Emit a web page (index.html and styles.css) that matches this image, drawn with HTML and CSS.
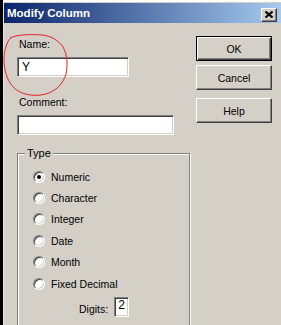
FILE: index.html
```html
<!DOCTYPE html>
<html lang="en">
<head>
    <meta charset="UTF-8">
    <title>Modify Column</title>
    <link rel="stylesheet" href="styles.css">
</head>
<body>

<div class="screen">
    <div class="window">
        <div class="titlebar">
            <span class="title">Modify Column</span>
            <span class="close">
                <svg width="8" height="7" viewBox="0 0 8 7"><path d="M0.5 0.5 L7.5 6.5 M7.5 0.5 L0.5 6.5" stroke="#000" stroke-width="2"/></svg>
            </span>
        </div>

        <div class="dialog">
            <div class="fields">
                <div class="label">Name:</div>
                <div class="input name-input">Y</div>
                <div class="label comment-label">Comment:</div>
                <div class="input comment-input"></div>

                <div class="group">
                    <div class="group-title">Type</div>
                    <div class="options">
                        <div class="option"><span class="radio checked"></span>Numeric</div>
                        <div class="option"><span class="radio"></span>Character</div>
                        <div class="option"><span class="radio"></span>Integer</div>
                        <div class="option"><span class="radio"></span>Date</div>
                        <div class="option"><span class="radio"></span>Month</div>
                        <div class="option"><span class="radio"></span>Fixed Decimal</div>
                    </div>
                    <div class="digits">
                        <span>Digits:</span>
                        <span class="input digits-input">2</span>
                    </div>
                </div>
            </div>

            <div class="buttons">
                <div class="button default">OK</div>
                <div class="button">Cancel</div>
                <div class="button help">Help</div>
            </div>
        </div>
    </div>

    <!-- red marker circle drawn over the Name field -->
    <svg class="marker" width="70" height="66" viewBox="0 0 70 66">
        <path d="M8 4 C14 1 26 0 40 1 C50 2 57 7 61 13 C65 20 66 30 64 40 C61 50 54 57 44 60 C36 62 26 62 18 58 C10 54 5 46 3 36 C1 26 2 16 5 10 C6 7 7 5 9 4" fill="none" stroke="#e8202a" stroke-width="1"/>
    </svg>
</div>

</body>
</html>
```

FILE: styles.css
```css
body {
    margin: 0;
    padding: 0;
    background-color: #fff;
    font-family: "Liberation Sans", Arial, sans-serif;
    font-size: 10.5px;
    color: #000;
}
.screen {
    position: relative;
    width: 278px;
    height: 325px;
    overflow: hidden;
    border-left: 3px solid #000;
}
.window {
    margin-top: 2px;
    height: 323px;
    background-color: #d4d0c8;
    border-top: 1px solid #d4d0c8;
    border-left: 1px solid #e8e6e2;
}
.titlebar {
    height: 20px;
    display: flex;
    align-items: center;
    justify-content: space-between;
    padding: 0 4px 0 3px;
    background: linear-gradient(to right, #0a246a, #a6caf0);
}
.title {
    color: #fff;
    font-weight: bold;
    font-size: 11.5px;
}
.close {
    width: 14px;
    height: 12px;
    display: flex;
    align-items: center;
    justify-content: center;
    background-color: #d4d0c8;
    border: 1px solid;
    border-color: #fff #404040 #404040 #fff;
    box-shadow: inset -1px -1px 0 #808080;
    margin-top: 3px;
}
.dialog {
    display: grid;
    grid-template-columns: 1fr 76px;
    padding: 13px 9px 0 13px;
}
.fields {
    padding-top: 2px;
}
.label {
    line-height: 13px;
    height: 13px;
    padding-left: 2px;
}
.input {
    box-sizing: border-box;
    height: 20px;
    background-color: #fff;
    border: 1px solid;
    border-color: #808080 #fff #fff #808080;
    box-shadow: inset 1px 1px 0 #404040, inset -1px -1px 0 #d4d0c8;
    padding: 3px 0 0 4px;
    font-size: 12px;
    line-height: 13px;
}
.name-input {
    width: 112px;
    margin-top: 6px;
}
.comment-label {
    margin-top: 19px;
}
.comment-input {
    width: 157px;
    margin-top: 6px;
}
.group {
    margin-top: 18px;
    width: 171px;
    height: 200px;
    border: 1px solid #808080;
    box-shadow: inset 1px 1px 0 #fff, 1px 1px 0 #fff;
}
.group-title {
    width: max-content;
    margin: -7px 0 0 7px;
    padding: 0 2px;
    line-height: 13px;
    background-color: #d4d0c8;
    font-size: 11px;
}
.options {
    margin-top: 6px;
    padding-left: 15px;
}
.option {
    height: 21.4px;
    display: flex;
    align-items: center;
    gap: 6px;
}
.radio {
    box-sizing: border-box;
    width: 12px;
    height: 12px;
    border-radius: 50%;
    background-color: #fff;
    border: 1px solid;
    border-color: #808080 #fff #fff #808080;
    box-shadow: inset 1px 1px 0 #404040, inset -1px -1px 0 #d4d0c8;
    display: flex;
    align-items: center;
    justify-content: center;
}
.radio.checked::after {
    content: "";
    width: 4px;
    height: 4px;
    border-radius: 50%;
    background-color: #000;
}
.digits {
    margin-top: 3px;
    padding-left: 61px;
    display: flex;
    align-items: flex-end;
    gap: 6px;
}
.digits span:first-child {
    padding-bottom: 2px;
}
.digits-input {
    width: 15px;
    padding: 1px 0 0 3px;
}
.buttons {
    display: flex;
    flex-direction: column;
}
.button {
    box-sizing: border-box;
    width: 76px;
    height: 25px;
    display: flex;
    align-items: center;
    justify-content: center;
    border: 1px solid;
    border-color: #fff #404040 #404040 #fff;
    box-shadow: inset -1px -1px 0 #808080;
    margin-bottom: 4px;
}
.button.default {
    border-color: #000;
    box-shadow: inset 1px 1px 0 #fff, inset -1px -1px 0 #404040, inset -2px -2px 0 #808080;
}
.button.help {
    margin-top: 4px;
}
.marker {
    position: absolute;
    left: -1px;
    top: 34px;
}
```
